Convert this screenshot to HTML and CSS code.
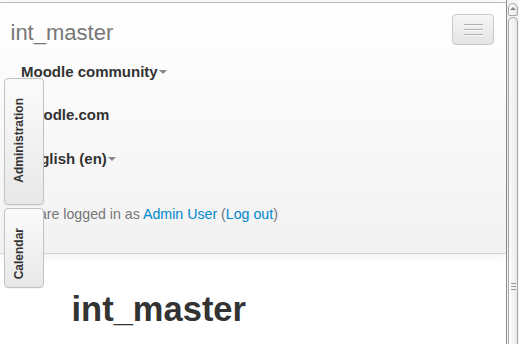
FILE: index.html
```html
<!DOCTYPE html>
<html>
<head>
<meta charset="utf-8">
<link rel="stylesheet" href="styles.css">
</head>
<body>
<div class="page">
  <header class="navbar">
    <div class="nav-head">
      <a class="brand">int_master</a>
      <button class="toggle"><span class="bar"></span><span class="bar"></span><span class="bar"></span></button>
    </div>
    <ul class="menu">
      <li><a>Moodle community<span class="caret"></span></a></li>
      <li><a>moodle.com</a></li>
      <li><a>English ‎(en)‎<span class="caret"></span></a></li>
    </ul>
    <div class="login">You are logged in as <a>Admin User</a> (<a>Log out</a>)</div>
  </header>
  <main class="content">
    <h1 class="title">int_master</h1>
  </main>
  <nav class="dock">
    <div class="tab tab-admin"><span class="tab-label">Administration</span></div>
    <div class="tab tab-cal"><span class="tab-label">Calendar</span></div>
  </nav>
</div>
<div class="scrollbar">
  <div class="sb-arrow"><span class="sb-tri"></span></div>
  <div class="sb-thumb"><span class="grip"></span><span class="grip"></span><span class="grip"></span></div>
</div>
</body>
</html>
```
FILE: styles.css
```css
html, body {
  margin: 0;
  padding: 0;
  height: 344px;
  overflow: hidden;
  background: #fff;
}
body {
  display: flex;
  font-family: "Liberation Sans", Arial, sans-serif;
  color: #333;
}
.page {
  flex: 1;
  position: relative;
  padding-top: 2px;
  min-width: 0;
}
.navbar {
  border-top: 1px solid #b8b8b8;
  border-bottom: 1px solid #d4d4d4;
  background: linear-gradient(#ffffff, #f2f2f2);
  box-shadow: 0 2px 10px rgba(0, 0, 0, 0.07);
  position: relative;
  z-index: 1;
}
.nav-head {
  display: flex;
  justify-content: space-between;
  align-items: flex-start;
  height: 47px;
  padding: 11px 12px 0 10.5px;
  box-sizing: border-box;
}
.brand {
  font-size: 22px;
  line-height: 22px;
  color: #777;
  margin-top: 7.5px;
}
.toggle {
  width: 42px;
  height: 31px;
  border: 1px solid #c8c8c8;
  border-radius: 4px;
  background: linear-gradient(#f6f6f6, #e4e4e4);
  display: flex;
  flex-direction: column;
  justify-content: center;
  align-items: center;
  gap: 4px;
  padding: 0;
  box-shadow: inset 0 1px 0 rgba(255,255,255,0.3);
}
.bar {
  display: block;
  width: 19px;
  height: 1px;
  background: #b0b0b0;
  box-shadow: 0 1px 0 #fafafa;
}
.menu {
  list-style: none;
  margin: 0;
  padding: 0 0 0 21px;
}
.menu a {
  display: inline-flex;
  align-items: center;
  font-size: 15px;
  font-weight: bold;
  line-height: 20px;
  padding: 11.75px 0;
  color: #333;
}
.caret {
  display: inline-block;
  width: 0;
  height: 0;
  border-top: 4px solid #888;
  border-left: 4px solid transparent;
  border-right: 4px solid transparent;
  margin-left: 1px;
  margin-top: 1px;
}
.login {
  font-size: 14.2px;
  line-height: 20px;
  color: #777;
  padding: 23px 0 29px 11px;
}
.login a {
  color: #0088cc;
}
.content {
  padding: 35px 0 0 71.5px;
}
.title {
  margin: 0;
  font-size: 34.5px;
  line-height: 40px;
  font-weight: bold;
  color: #333;
}
.dock {
  position: absolute;
  left: 4px;
  top: 78px;
  z-index: 2;
  display: flex;
  flex-direction: column;
  gap: 3px;
}
.tab {
  width: 40px;
  box-sizing: border-box;
  border: 1px solid #c2c2c2;
  border-radius: 4px;
  background: linear-gradient(#fbfbfb, #e8e8e8);
  padding: 19px 0 0 7px;
  box-shadow: 0 1px 1px rgba(0,0,0,0.05);
}
.tab-admin { height: 127px; }
.tab-cal { height: 80px; }
.tab-label {
  display: inline-block;
  writing-mode: vertical-rl;
  transform: rotate(180deg);
  font-size: 12px;
  line-height: 14px;
  font-weight: bold;
  color: #333;
}
.scrollbar {
  width: 13px;
  height: 344px;
  flex: none;
  box-sizing: border-box;
  border-left: 1px solid #8e8e8e;
  background: #f4f4f4;
  display: flex;
  flex-direction: column;
  align-items: stretch;
  padding-top: 3px;
}
.sb-arrow {
  height: 13px;
  margin: 0 1px 0 1px;
  border: 1px solid #a8a8a8;
  border-radius: 5px 5px 2px 2px;
  background: linear-gradient(90deg, #ffffff, #e6e6e6);
  display: flex;
  justify-content: center;
  padding-top: 3px;
  box-sizing: border-box;
}
.sb-tri {
  width: 0;
  height: 0;
  border-bottom: 3px solid #888;
  border-left: 3px solid transparent;
  border-right: 3px solid transparent;
}
.sb-thumb {
  flex: 1;
  margin: 1px 1px 0 1px;
  border: 1px solid #a8a8a8;
  border-bottom: none;
  border-radius: 5px 5px 0 0;
  background: linear-gradient(90deg, #ffffff, #e8e8e8);
  display: flex;
  flex-direction: column;
  align-items: center;
  gap: 2px;
  padding-top: 265px;
  box-sizing: border-box;
}
.grip {
  display: block;
  width: 5px;
  height: 1px;
  background: #999;
}
```
